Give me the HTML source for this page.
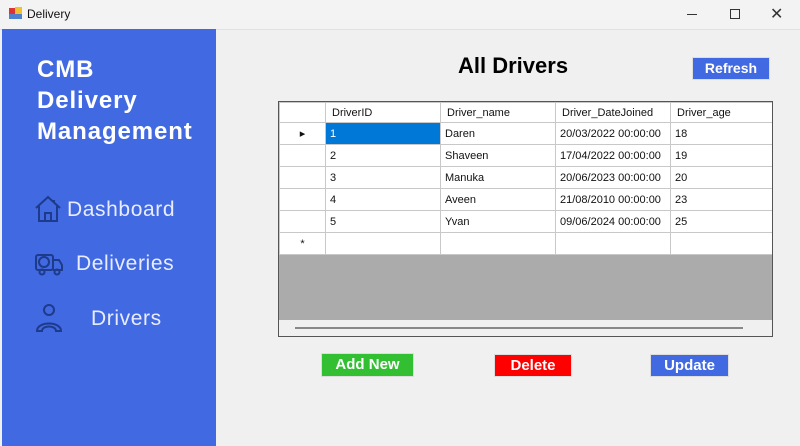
<!DOCTYPE html>
<html><head><style>
body{margin:0;width:800px;height:446px;background:#f0f0f0;font-family:"Liberation Sans",sans-serif;position:relative;overflow:hidden}
.a{position:absolute}
.tb{left:0;top:0;width:800px;height:29px;background:#f3f3f3;border-bottom:1px solid #e0e0e0}
.side{left:2px;top:29px;width:214px;height:417px;background:#4169e1;color:#fff}
.nav{color:#e8ecff;font-size:21px;letter-spacing:0.6px}
table{border-collapse:collapse;font-size:11px;table-layout:fixed}
td{border:1px solid #c8c8c8;height:21px;padding:0 0 0 4px;background:#fff;color:#111;overflow:hidden;white-space:nowrap}
th{border:1px solid #c8c8c8;height:19px;font-weight:normal;text-align:left;padding:0 0 0 6px;background:#fff;color:#111;font-size:11px}
td.rh{background:#fff;padding:0;text-align:center}
.btn{font-weight:bold;font-size:15px;color:#fff;text-align:center;line-height:22px;border:1px solid #ddd}
</style></head><body>
<div class="a tb">
 <div class="a" style="left:9px;top:8px;width:6px;height:6px;background:#d33"></div>
 <div class="a" style="left:15px;top:7px;width:7px;height:7px;background:#f0c030"></div>
 <div class="a" style="left:9px;top:14px;width:13px;height:5px;background:#5080d0"></div>
 <div class="a" style="left:27px;top:7px;font-size:12px;color:#111">Delivery</div>
 <div class="a" style="left:687px;top:14px;width:10px;height:1px;background:#333"></div>
 <div class="a" style="left:730px;top:9px;width:8px;height:8px;border:1px solid #333"></div>
 <div class="a" style="left:770px;top:4px;font-size:16px;color:#333">✕</div>
</div>
<div class="a side">
 <div class="a" style="left:35px;top:25px;font-size:24px;font-weight:bold;line-height:31px;letter-spacing:0.9px">CMB<br>Delivery<br>Management</div>
 <svg class="a" style="left:32px;top:166px" width="28" height="28" viewBox="0 0 28 28" fill="none" stroke="#1e3a8a" stroke-width="2"><path d="M2 13 L14 2 L26 13 M5 11 V26 H23 V11 M11 26 V18 H17 V26 M20 5 V8"/></svg>
 <div class="a nav" style="left:65px;top:169px">Dashboard</div>
 <svg class="a" style="left:32px;top:223px" width="30" height="24" viewBox="0 0 30 24" fill="none" stroke="#1e3a8a" stroke-width="2"><rect x="2" y="3" width="17" height="15" rx="2"/><circle cx="10" cy="10" r="5"/><path d="M19 8 H25 L28 13 V18 H19"/><circle cx="8" cy="20" r="2.5"/><circle cx="23" cy="20" r="2.5"/></svg>
 <div class="a nav" style="left:74px;top:223px">Deliveries</div>
 <svg class="a" style="left:32px;top:274px" width="30" height="30" viewBox="0 0 30 30" fill="none" stroke="#1e3a8a" stroke-width="2"><circle cx="15" cy="7" r="5"/><path d="M3 28 C3 18 27 18 27 28 H22 C22 22 8 22 8 28 Z"/></svg>
 <div class="a nav" style="left:89px;top:278px">Drivers</div>
</div>
<div class="a" style="left:458px;top:53px;font-size:22px;font-weight:bold;color:#000">All Drivers</div>
<div class="a btn" style="left:692px;top:57px;width:76px;height:21px;background:#4169e1;font-size:14px;line-height:21px">Refresh</div>
<div class="a" style="left:278px;top:101px;width:493px;height:234px;border:1px solid #555;background:#ababab;overflow:hidden">
<table style="width:495px">
<colgroup><col style="width:46px"><col style="width:115px"><col style="width:115px"><col style="width:115px"><col style="width:104px"></colgroup>
<tr><th></th><th>DriverID</th><th>Driver_name</th><th>Driver_DateJoined</th><th>Driver_age</th></tr>
<tr><td class="rh">▸</td><td style="background:#0078d7;color:#fff">1</td><td>Daren</td><td>20/03/2022 00:00:00</td><td>18</td></tr>
<tr><td class="rh"></td><td>2</td><td>Shaveen</td><td>17/04/2022 00:00:00</td><td>19</td></tr>
<tr><td class="rh"></td><td>3</td><td>Manuka</td><td>20/06/2023 00:00:00</td><td>20</td></tr>
<tr><td class="rh"></td><td>4</td><td>Aveen</td><td>21/08/2010 00:00:00</td><td>23</td></tr>
<tr><td class="rh"></td><td>5</td><td>Yvan</td><td>09/06/2024 00:00:00</td><td>25</td></tr>
<tr><td class="rh">*</td><td></td><td></td><td></td><td></td></tr>
</table>
<div class="a" style="left:0;top:218px;width:493px;height:16px;background:#f0f0f0"></div>
<div class="a" style="left:16px;top:225px;width:448px;height:2px;background:#888"></div>
</div>
<div class="a btn" style="left:321px;top:353px;width:91px;height:22px;background:#32c032">Add New</div>
<div class="a btn" style="left:494px;top:354px;width:76px;height:21px;background:#ff0000">Delete</div>
<div class="a btn" style="left:650px;top:354px;width:77px;height:21px;background:#4169e1">Update</div>
</body></html>
